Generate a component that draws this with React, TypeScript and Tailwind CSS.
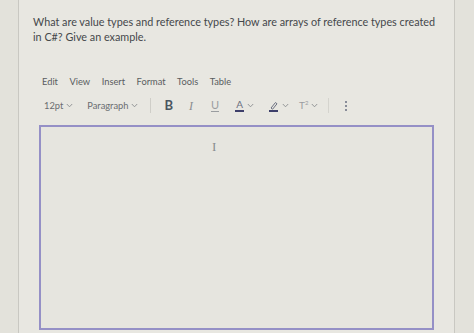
import React from "react";

const Chev = () => (
  <svg width="7" height="5" viewBox="0 0 7 5" className="ml-[3px]">
    <path d="M0.8 1 L3.5 3.8 L6.2 1" fill="none" stroke="#8a8d90" strokeWidth="0.9" />
  </svg>
);

export default function App() {
  return (
    <div
      className="w-[474px] h-[333px] bg-[#e3e2db] flex overflow-hidden"
      style={{ fontFamily: "Lato, 'Open Sans', sans-serif" }}
    >
      <div className="ml-[18px] w-[437px] h-full bg-[#e8e7e1] border-x border-[#c9c8c2] flex flex-col">
        <div className="pl-[14px] pt-[14px] text-[10.8px] leading-[15px] text-[#45484b]">
          <p>What are value types and reference types? How are arrays of reference types created</p>
          <p>in C#? Give an example.</p>
        </div>
        <div className="mt-[31px] pl-[23px] flex gap-[11.5px] text-[9.3px] text-[#5a5d60]">
          <span>Edit</span>
          <span>View</span>
          <span>Insert</span>
          <span>Format</span>
          <span>Tools</span>
          <span>Table</span>
        </div>
        <div className="mt-[9px] pl-[25px] flex items-center h-[16px] text-[9.3px] text-[#6a6d70]">
          <span className="flex items-center">12pt<Chev /></span>
          <span className="flex items-center ml-[14px]">Paragraph<Chev /></span>
          <span className="ml-[12px] w-px h-[15px] bg-[#cfcec8]" />
          <span className="ml-[13px] text-[13px] font-bold text-[#4a5560]">B</span>
          <span className="ml-[16px] text-[12px] italic text-[#8a8d90]" style={{ fontFamily: "'Liberation Serif', serif" }}>I</span>
          <span className="ml-[18px] flex flex-col items-center">
            <span className="text-[11px] leading-[10px] text-[#9a9da0]">U</span>
            <span className="w-[8px] h-px bg-[#9a9da0] mt-[1px]" />
          </span>
          <span className="ml-[16px] flex items-center">
            <span className="flex flex-col items-center">
              <span className="text-[10px] leading-[10px] text-[#6a6f80]">A</span>
              <span className="w-[9px] h-[2px] bg-[#3d3f6a] mt-[1px]" />
            </span>
            <Chev />
          </span>
          <span className="ml-[14px] flex items-center">
            <svg width="11" height="12" viewBox="0 0 11 12">
              <path d="M3 8 L7.5 2.5 L9 3.8 L4.6 9.2 Z" fill="none" stroke="#6a6f80" strokeWidth="1" />
              <rect x="1" y="10" width="9" height="2" fill="#3d3f6a" />
            </svg>
            <Chev />
          </span>
          <span className="ml-[10px] flex items-center text-[#9a9da0]">
            <span className="text-[10px]">T</span>
            <span className="text-[6px] -mt-[6px]">2</span>
            <Chev />
          </span>
          <span className="ml-[10px] w-px h-[15px] bg-[#d5d4ce]" />
          <span className="ml-[16px] flex flex-col gap-[2px]">
            <span className="w-[2px] h-[2px] rounded-full bg-[#6a6f80]" />
            <span className="w-[2px] h-[2px] rounded-full bg-[#6a6f80]" />
            <span className="w-[2px] h-[2px] rounded-full bg-[#6a6f80]" />
          </span>
        </div>
        <div className="mt-[11px] ml-[20px] w-[395px] h-[205px] border-2 border-[#9590c6] bg-[#e6e5df] relative">
          <span
            className="absolute left-[171px] top-[10px] text-[13px] text-[#8a8d90]"
            style={{ fontFamily: "'Liberation Serif', serif" }}
          >
            I
          </span>
        </div>
      </div>
    </div>
  );
}
